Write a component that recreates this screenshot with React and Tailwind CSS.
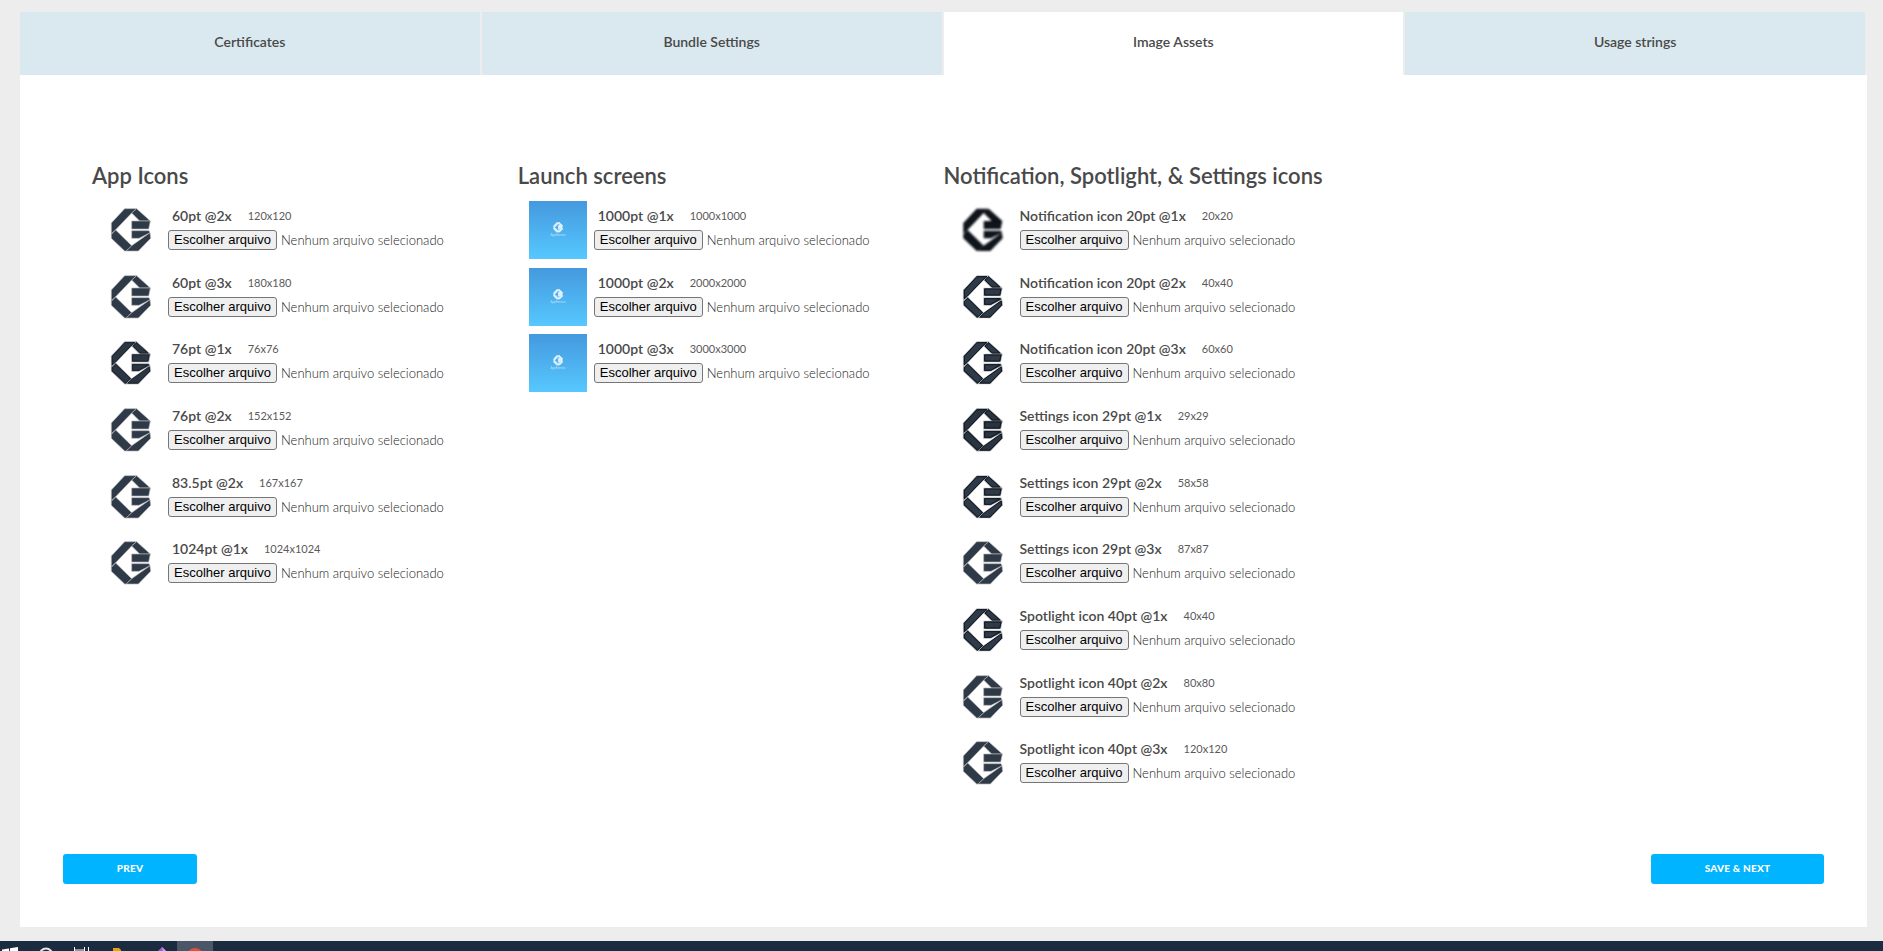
import { useRef, useState } from 'react'
import clsx from 'clsx'

const TABS = ['Certificates', 'Bundle Settings', 'Image Assets', 'Usage strings']

const APP_ICONS = [
  { name: '60pt @2x', size: '120x120' },
  { name: '60pt @3x', size: '180x180' },
  { name: '76pt @1x', size: '76x76', tone: 'mid' },
  { name: '76pt @2x', size: '152x152' },
  { name: '83.5pt @2x', size: '167x167' },
  { name: '1024pt @1x', size: '1024x1024' },
]

const LAUNCH_SCREENS = [
  { name: '1000pt @1x', size: '1000x1000' },
  { name: '1000pt @2x', size: '2000x2000' },
  { name: '1000pt @3x', size: '3000x3000' },
]

const OTHER_ICONS = [
  { name: 'Notification icon 20pt @1x', size: '20x20', tone: 'tiny' },
  { name: 'Notification icon 20pt @2x', size: '40x40', tone: 'dark' },
  { name: 'Notification icon 20pt @3x', size: '60x60', tone: 'dark' },
  { name: 'Settings icon 29pt @1x', size: '29x29', tone: 'small' },
  { name: 'Settings icon 29pt @2x', size: '58x58', tone: 'dark' },
  { name: 'Settings icon 29pt @3x', size: '87x87' },
  { name: 'Spotlight icon 40pt @1x', size: '40x40', tone: 'dark' },
  { name: 'Spotlight icon 40pt @2x', size: '80x80' },
  { name: 'Spotlight icon 40pt @3x', size: '120x120' },
]

const TONES = {
  normal: { svg: 'fill-[#2f3a48]', halo: 'stroke-[#b4b4b4]', edge: 'stroke-none' },
  mid: { svg: 'fill-[#2c3643]', halo: 'stroke-[#b4b4b4]', edge: 'stroke-[#1c242e]' },
  dark: { svg: 'fill-[#2f3a48]', halo: 'stroke-[#d0d0d0]', edge: 'stroke-[#10161e]' },
  small: { svg: 'fill-[#2a3441]', halo: 'stroke-[#9a9da1]', edge: 'stroke-[#10161e]' },
  tiny: { svg: 'fill-[#10151c] blur-[1px]', halo: 'stroke-none', edge: 'stroke-[#0b0f14]' },
}

function LogoShapes() {
  return (
    <>
      <path d="M36 84 76 41H112L97 54 49 104 36 116Z" />
      <path d="M112 41 153 78H121L97 54Z" />
      <path d="M97 78H153L148 102H97Z" />
      <path d="M97 107H149L152 113 119 130H97Z" />
      <path d="M152 113 154 130 117 168H80L97 152Z" />
      <path d="M36 118 49 105 97 152 80 168H76L36 130Z" />
    </>
  )
}

// same pieces pulled in a little, for the dark inner outline
function LogoEdges() {
  return (
    <>
      <path d="M39 85 77 44H107L95 53 47 103 39 110Z" />
      <path d="M112 45 145 75H123L101 54Z" />
      <path d="M100 81H149L145 99H100Z" />
      <path d="M100 110H146L118 127H100Z" />
      <path d="M149 117 151 129 116 165H86L99 153Z" />
      <path d="M39 119 49 109 93 152 79 165 39 128Z" />
    </>
  )
}

function IconPreview({ tone = 'normal' }) {
  const t = TONES[tone]
  return (
    <svg viewBox="11 18 174 174" className={clsx('size-[58px] shrink-0', t.svg)} aria-hidden="true">
      <g strokeWidth="2" className={t.halo}>
        <LogoShapes />
      </g>
      <g strokeWidth="3" fill="none" className={t.edge}>
        <LogoEdges />
      </g>
    </svg>
  )
}

function LaunchPreview() {
  return (
    <div className="size-[58px] shrink-0 bg-linear-to-b from-[#4599de] to-[#56c8ff]">
      <svg viewBox="0 0 58 58" className="size-full fill-[#e4f3fd]" aria-hidden="true">
        <g transform="translate(22 18.5) scale(0.075)" stroke="#e4f3fd" strokeWidth="7">
          <LogoShapes />
        </g>
        <text x="29" y="35" textAnchor="middle" fontSize="3" opacity="0.7">
          AppFormes
        </text>
      </svg>
    </div>
  )
}

function AssetRow({ asset, launch, indent }) {
  const input = useRef(null)
  const [file, setFile] = useState('')
  const id = asset.name.replace(/[^a-z0-9]+/gi, '-').toLowerCase()

  return (
    <li className="flex items-start gap-[7px] pl-[11px]">
      {launch ? <LaunchPreview /> : <IconPreview tone={asset.tone} />}
      <div className="min-w-0 pt-[5px]">
        <div className={clsx('flex items-center gap-4 leading-5 whitespace-nowrap', indent && 'pl-1')}>
          <label htmlFor={id} className="text-[14px] font-semibold text-[#494949]">
            {asset.name}
          </label>
          <span className="text-[11px] text-[#5a5a5a]">{asset.size}</span>
        </div>
        <div className="mt-1 flex items-center gap-1 whitespace-nowrap">
          <input
            ref={input}
            id={id}
            type="file"
            className="hidden"
            onChange={(e) => setFile(e.target.files[0]?.name || '')}
          />
          <button
            type="button"
            onClick={() => input.current.click()}
            className="h-5 w-[109px] rounded-[3px] border border-[#767676] bg-[#efefef] font-['Liberation_Sans',Arial,sans-serif] text-[13px] leading-4 text-black"
          >
            Escolher arquivo
          </button>
          <span className="text-[13px] leading-5 font-light text-[#222]">{file || 'Nenhum arquivo selecionado'}</span>
        </div>
      </div>
    </li>
  )
}

function AssetColumn({ title, assets, launch, indent }) {
  return (
    <section>
      <h2 className="text-[22px] leading-8 font-semibold whitespace-nowrap text-[#494949]">{title}</h2>
      <ul className="mt-[9px] grid min-h-[600px] grid-rows-9">
        {assets.map((asset) => (
          <AssetRow key={asset.name} asset={asset} launch={launch} indent={indent} />
        ))}
      </ul>
    </section>
  )
}

function Taskbar() {
  return (
    <footer className="flex h-[10px] overflow-hidden bg-[#1b2b40]">
      <svg width="177" height="10" aria-hidden="true">
        <path d="M2 8.4 9 7.4V10H2ZM10 7.2 18 6V10H10Z" fill="#fff" />
        <circle cx="46" cy="14" r="6.5" fill="none" stroke="#e3e6ea" strokeWidth="2" />
        <path d="M74.5 6V10M84.5 6V10M88.5 6V10M74.5 9H84.5" stroke="#fff" fill="none" />
        <path d="M113 7H119L121 9V10H113Z" fill="#e5a50a" />
        <path d="M158 10 162 6 166 10Z" fill="#9b5fd6" />
        <path d="M162 6 166 10H163Z" fill="#c9a5ee" />
      </svg>
      <div className="w-9 bg-[#4b5766]">
        <svg width="36" height="10" aria-hidden="true">
          <circle cx="18" cy="15" r="8" fill="#dd5144" />
        </svg>
      </div>
    </footer>
  )
}

export default function App() {
  const [tab, setTab] = useState('Image Assets')

  return (
    <div className="flex min-h-screen flex-col bg-[#ededed] font-['Lato',sans-serif]">
      <main className="mx-4 mt-3 mb-[14px] ml-5 flex grow flex-col bg-white">
        <nav className="grid grid-cols-4">
          {TABS.map((name) => (
            <button
              key={name}
              type="button"
              onClick={() => setTab(name)}
              className={clsx(
                'h-[63px] border-r-2 border-[#ededed] pb-1 text-[14px] font-semibold text-[#494949]',
                name === tab ? 'bg-white' : 'bg-[#dae8ef]',
              )}
            >
              {name}
            </button>
          ))}
        </nav>

        <div className="grid grid-cols-4 px-[72px] pt-[85px]">
          <AssetColumn title="App Icons" assets={APP_ICONS} indent />
          <AssetColumn title="Launch screens" assets={LAUNCH_SCREENS} launch indent />
          <AssetColumn title="Notification, Spotlight, & Settings icons" assets={OTHER_ICONS} />
        </div>

        <div className="mt-auto mb-[43px] flex justify-between px-[43px]">
          <button
            type="button"
            className="h-[30px] w-[134px] rounded-[3px] bg-[#00b4ff] pb-px text-[10px] font-black tracking-wide text-white"
          >
            PREV
          </button>
          <button
            type="button"
            className="h-[30px] w-[173px] rounded-[3px] bg-[#00b4ff] pb-px text-[10px] font-black tracking-wide text-white"
          >
            SAVE &amp; NEXT
          </button>
        </div>
      </main>
      <Taskbar />
    </div>
  )
}
